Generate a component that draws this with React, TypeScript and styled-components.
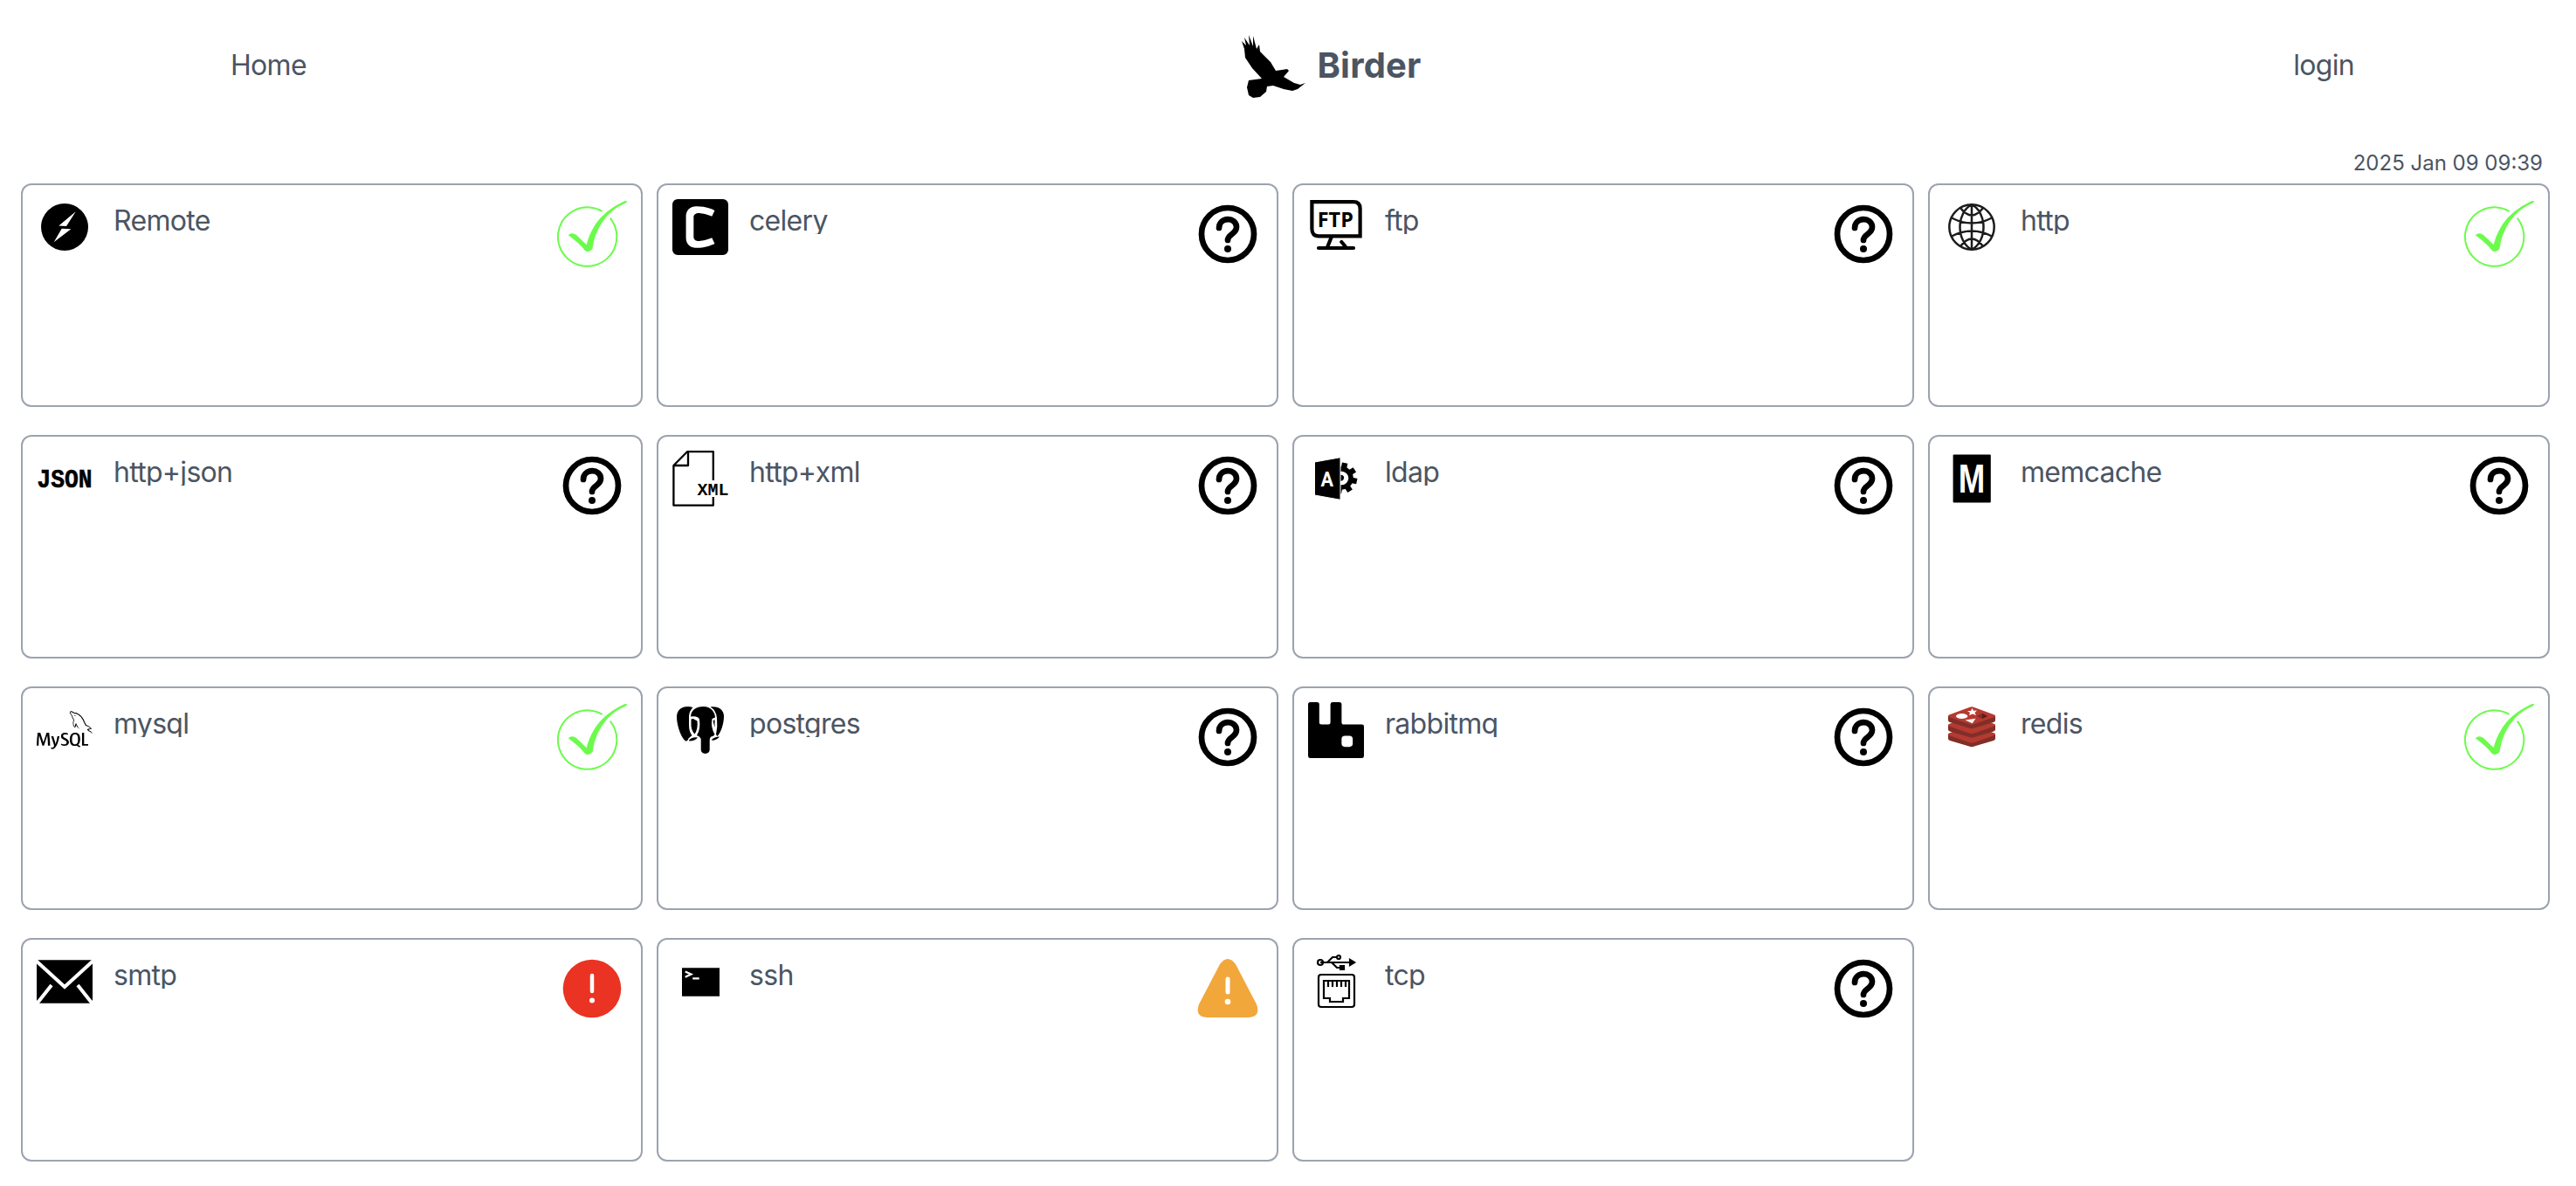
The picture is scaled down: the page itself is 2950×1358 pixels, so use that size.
import React from "react";
import styled, { createGlobalStyle } from "styled-components";
import { SiCelery, SiMysql, SiRabbitmq } from "react-icons/si";

const GlobalStyle = createGlobalStyle`
  * { box-sizing: border-box; }
  body {
    margin: 0;
    background: #fff;
    color: #4b5563;
    font-family: Inter, "Liberation Sans", sans-serif;
  }
`;

const Page = styled.div`
  width: 2944px;
  min-height: 1358px;
  padding: 0 24px;
`;

const Header = styled.header`
  height: 150px;
  padding: 0 224px 0 240px;
  display: grid;
  grid-template-columns: 1fr auto 1fr;
  align-items: center;
`;

const NavLink = styled.a<{ $end?: boolean }>`
  font-size: 32px;
  line-height: 48px;
  letter-spacing: -0.7px;
  justify-self: ${(p) => (p.$end ? "end" : "start")};
`;

const Brand = styled.div`
  display: flex;
  align-items: center;
  gap: 8px;
  margin-left: 88px;
  font-size: 40px;
  line-height: 56px;
  font-weight: 700;
  letter-spacing: 0.2px;

  svg {
    margin-top: 6px;
  }
`;

const Timestamp = styled.div`
  height: 60px;
  padding: 21px 8px 0 0;
  text-align: right;
  font-size: 24px;
  line-height: 32px;
`;

const Grid = styled.main`
  display: grid;
  grid-template-columns: repeat(4, 712px);
  gap: 32px 16px;
`;

const Card = styled.section`
  height: 256px;
  padding: 16px;
  display: flex;
  align-items: flex-start;
  border: 2px solid #9ca3af;
  border-radius: 12px;
`;

const ServiceIcon = styled.div`
  width: 64px;
  height: 64px;
  flex: none;
  color: #000;
  svg {
    display: block;
    width: 64px;
    height: 64px;
  }
`;

const Name = styled.div`
  flex: 1;
  min-width: 0;
  height: 32px;
  margin: 8px 0 0 24px;
  padding-top: 1px;
  overflow: hidden;
  white-space: nowrap;
  font-size: 32px;
  line-height: 32px;
  letter-spacing: -0.7px;
`;

const StatusIcon = styled.svg`
  display: block;
  flex: none;
  width: 80px;
  height: 80px;
`;

const BirdLogo = () => (
  <svg width="80" height="80" viewBox="0 0 80 80">
    <path d="M2 9L7 14L5 5L11 14L10 2L15 15L15 3L19 18L22 13L23 21L35 33L41 43L48 42L54 41L56 43L50 50L62 57L69 59L75 57L66 64L60 66L50 64L38 60L31 61L30 67L23 73L15 74L10 71L8 62L10 54L25 52L14 40L6 28L5 18Z" />
  </svg>
);

const RemoteIcon = () => (
  <svg viewBox="0 0 64 64">
    <circle cx="32" cy="32" r="27" />
    <path fill="#fff" d="M44.700 14.300L25.300 30.500L34 31ZM28.700 33.700L39.300 34.300L19.700 49.300Z" />
  </svg>
);

const FtpIcon = () => (
  <svg viewBox="0 0 64 64" fill="none" stroke="#000" strokeWidth="4.2">
    <path d="M4.400 3.200H52Q59.600 3.200 59.600 11V42.300H12Q4.400 42.300 4.400 34Z" />
    <path strokeLinecap="round" d="M26.500 44L22.500 54M38.300 49L42.500 54M12 56H52" />
    <text x="10.800" y="32" fontFamily="Open Sans" fontWeight="700" fontSize="23.500" textLength="41" lengthAdjust="spacingAndGlyphs" fill="#000" stroke="none">FTP</text>
  </svg>
);

const GlobeIcon = () => (
  <svg viewBox="0 0 64 64" fill="none" stroke="#1c1c1c" strokeWidth="2.5">
    <circle cx="32" cy="32" r="25.700" />
    <path d="M32 6V58M32 6C14 16 14 48 32 58M32 6C50 16 50 48 32 58M9 21.500Q32 33.500 55 21.500M9 42.500Q32 30.500 55 42.500M19 10Q32 27 45 10M19 54Q32 37 45 54" />
  </svg>
);

const JsonIcon = () => (
  <svg viewBox="0 0 64 64">
    <text x="0.500" y="42" fontFamily="Liberation Mono" fontWeight="700" fontSize="30" textLength="63" lengthAdjust="spacingAndGlyphs" stroke="#000" strokeWidth="0.600">JSON</text>
  </svg>
);

const XmlIcon = () => (
  <svg viewBox="0 0 64 64" fill="none" stroke="#000" strokeWidth="2.3">
    <path strokeLinejoin="round" d="M46.800 34V1.200H17L1.400 17V62.700H46.800V53M18 1.200V17H1.400" />
    <text x="28.500" y="50.500" fontFamily="Liberation Mono" fontWeight="700" fontSize="19.500" textLength="36" lengthAdjust="spacingAndGlyphs" fill="#000" stroke="none">XML</text>
  </svg>
);

const LdapIcon = () => (
  <svg viewBox="0 0 64 64">
    <g transform="translate(38.500 31.500) rotate(12)">
      <circle r="10.500" fill="none" stroke="#000" strokeWidth="5.500" />
      <path stroke="#000" strokeWidth="6.500" d="M0-11V-17.700M8-8L12.500-12.500M11 0H17.700M8 8L12.500 12.500M0 11V17.700" />
      <circle cx="-1" r="3.500" />
    </g>
    <path stroke="#fff" d="M7.500 13L37 7.700V56.300L7.500 51Z" />
    <text x="14.500" y="40.700" fontFamily="Roboto" fontWeight="700" fontSize="24.500" textLength="14.500" lengthAdjust="spacingAndGlyphs" fill="#fff">A</text>
  </svg>
);

const MemcacheIcon = () => (
  <svg viewBox="0 0 64 64">
    <rect x="10.600" y="4.400" width="43.200" height="55.200" rx="1" />
    <text x="16.800" y="48" fontFamily="Liberation Sans" fontWeight="700" fontSize="47" textLength="30.500" lengthAdjust="spacingAndGlyphs" fill="#fff">M</text>
  </svg>
);

const PostgresIcon = () => (
  <svg viewBox="0 0 64 64">
    <path d="M23.500 6C14 3 5 7 5 17C5 25 9 38 13.500 43C15.500 45.500 17.500 45 18.500 41.500L22.500 38Q19 34 19 26V16Q19.500 10 23.500 6Z" />
    <path d="M43.500 5.500C53 4 59 9 59 16C59 24 56 34 51.500 39L50 37Q52 28 51 18Q50 9 43.500 5.500Z" />
    <path d="M21 16.500C21.500 9 27 5 35.500 5C44 5 48.500 11 49 17.500L45.500 19Q43.500 28 48.500 37L46.500 39Q43 39 42.700 43V54C42.700 60.500 32.700 60.500 32.700 54V42Q31.500 39 28 38Q32.500 31 31 20Q30 15.500 21 16.500Z" />
    <path d="M21.500 19.500Q24 18.500 25.500 20L28.500 21.500Q29.500 31 25.500 36.500Q22 33 21.500 27Z" />
    <path d="M48.500 20L46.500 21.500L48.500 29ZM19 43.500Q23 39.500 29 40.500Q26 44.500 19.500 44.500ZM45 43Q48 39.500 54 39.500Q51 43.500 45.500 43.800Z" />
  </svg>
);

const RedisIcon = () => (
  <svg viewBox="0 0 64 64">
    {[21, 10.5, 0].map((dy) => (
      <g key={dy} transform={`translate(0 ${dy})`}>
        <path fill="#812e28" d="M5 16H59V21Q59 22 57 23L35 29.500Q32 31 29 29.500L7 23Q5 22 5 21Z" />
        <path fill="#b53a31" d="M6 14.500L29 6Q32 4.500 35 6L58 14.500Q60 15.500 58 17L35 25Q32 26.300 29 25L6 17Q4 15.500 6 14.500Z" />
      </g>
    ))}
    <ellipse cx="20.700" cy="16" rx="6.700" ry="3" fill="#fff" />
    <path fill="#fff" d="M32.500 7L34 9.700L38 9.500L35.500 12L37 15L33 13.500L29 15L30 12L27 10L31 10ZM24.500 20.500L36.500 18.700L32.700 24.300Z" />
    <path fill="#812e28" d="M37.300 16L44 12.700V19Z" />
    <path fill="#5d1d17" d="M44 12.700L50.500 16L44 19Z" />
  </svg>
);

const MailIcon = () => (
  <svg viewBox="0 0 64 64">
    <path d="M0 7.200H64V56.700H0Z" />
    <path fill="none" stroke="#fff" strokeWidth="4" d="M-2 7L32 38L66 7M17 36L0 57.500M47 36L64 57.500" />
    <path fill="#fff" d="M0 53V57H2.500ZM64 53V57H61.500Z" />
  </svg>
);

const TerminalIcon = () => (
  <svg viewBox="0 0 64 64">
    <path d="M11 16.200H54V48.700H11Z" />
    <path fill="none" stroke="#fff" strokeWidth="2.200" d="M14.700 20.500L21.500 23.500L14.700 26.700M23.200 28.300H30.700" />
  </svg>
);

const TcpIcon = () => (
  <svg viewBox="0 0 64 64" fill="none" stroke="#000" strokeWidth="2.2">
    <path d="M14 10H50M22 10L28 4H34M27 10L33 16H38" />
    <circle cx="14" cy="10" r="3" />
    <circle cx="35" cy="4" r="2" />
    <path fill="#000" d="M48 7L53 10L48 13ZM37 14H41V18H37Z" />
    <rect x="12" y="24" width="41" height="37" rx="3" />
    <path d="M18 51V31H47V51H40V55H25V51ZM23 31V38M28 31V38M33 31V38M38 31V38M43 31V38" />
  </svg>
);

const CheckStatus = () => (
  <StatusIcon viewBox="0 0 80 80">
    <path fill="none" stroke="#6cfb4c" strokeWidth="2" d="M51.700 14A33.700 33.700 0 1 0 60.700 21.700" />
    <path fill="#6cfb4c" d="M12.700 41.300Q17 37.500 22 41L33.700 52.300Q36 42 42 32Q52 14 77 2.200Q82 1.500 79 4.200Q66 9.500 58 18.500Q43 35 40.500 57Q36 62 32 59Q26 51 12.700 41.300Z" />
  </StatusIcon>
);

const UnknownStatus = () => (
  <StatusIcon viewBox="0 0 80 80" fill="none" stroke="#000" strokeWidth="6.7">
    <circle cx="40" cy="40" r="30" />
    <path strokeLinecap="round" d="M30 33C30 20 50 20 50 32C50 40 40 40 40 47" />
    <circle cx="40" cy="57" r="4" fill="#000" stroke="none" />
  </StatusIcon>
);

const ErrorStatus = () => (
  <StatusIcon viewBox="0 0 80 80">
    <circle cx="40" cy="40" r="33.300" fill="#ea3323" />
    <path stroke="#fff" strokeWidth="4.500" strokeLinecap="round" d="M40 25V43" />
    <circle cx="40" cy="53.500" r="3" fill="#fff" />
  </StatusIcon>
);

const WarningStatus = () => (
  <StatusIcon viewBox="0 0 80 80">
    <path fill="#f2a73b" d="M31 12Q40 0 49 12L73 58Q78 72 64 73H16Q2 72 7 58Z" />
    <path stroke="#fff" strokeWidth="5" strokeLinecap="round" d="M40 29V44" />
    <circle cx="40" cy="55" r="3.300" fill="#fff" />
  </StatusIcon>
);

const statuses = {
  ok: CheckStatus,
  unknown: UnknownStatus,
  error: ErrorStatus,
  warning: WarningStatus,
};

const services: { name: string; icon: React.ComponentType; status: keyof typeof statuses }[] = [
  { name: "Remote", icon: RemoteIcon, status: "ok" },
  { name: "celery", icon: SiCelery, status: "unknown" },
  { name: "ftp", icon: FtpIcon, status: "unknown" },
  { name: "http", icon: GlobeIcon, status: "ok" },
  { name: "http+json", icon: JsonIcon, status: "unknown" },
  { name: "http+xml", icon: XmlIcon, status: "unknown" },
  { name: "ldap", icon: LdapIcon, status: "unknown" },
  { name: "memcache", icon: MemcacheIcon, status: "unknown" },
  { name: "mysql", icon: SiMysql, status: "ok" },
  { name: "postgres", icon: PostgresIcon, status: "unknown" },
  { name: "rabbitmq", icon: SiRabbitmq, status: "unknown" },
  { name: "redis", icon: RedisIcon, status: "ok" },
  { name: "smtp", icon: MailIcon, status: "error" },
  { name: "ssh", icon: TerminalIcon, status: "warning" },
  { name: "tcp", icon: TcpIcon, status: "unknown" },
];

export default function App() {
  return (
    <Page>
      <GlobalStyle />
      <Header>
        <NavLink>Home</NavLink>
        <Brand>
          <BirdLogo />
          Birder
        </Brand>
        <NavLink $end>login</NavLink>
      </Header>
      <Timestamp>2025 Jan 09 09:39</Timestamp>
      <Grid>
        {services.map(({ name, icon: Icon, status }) => {
          const Status = statuses[status];
          return (
            <Card key={name}>
              <ServiceIcon>
                <Icon />
              </ServiceIcon>
              <Name>{name}</Name>
              <Status />
            </Card>
          );
        })}
      </Grid>
    </Page>
  );
}
